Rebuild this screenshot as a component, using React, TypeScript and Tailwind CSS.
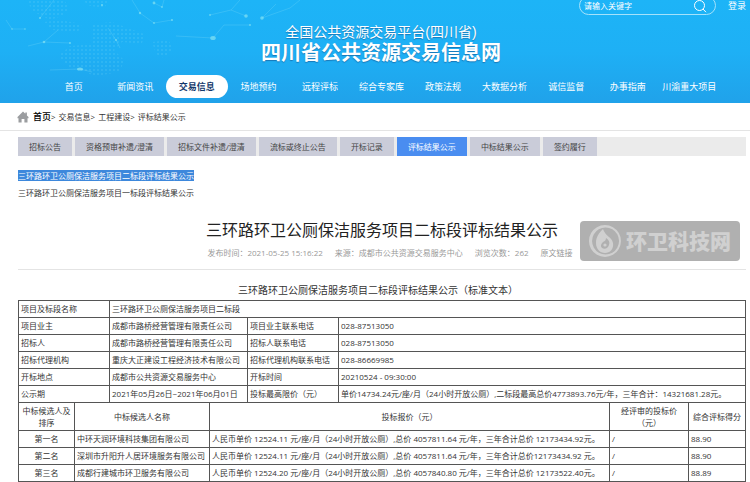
const navItems = [
  "首页",
  "新闻资讯",
  "交易信息",
  "场地预约",
  "远程评标",
  "综合专家库",
  "政策法规",
  "大数据分析",
  "诚信监督",
  "办事指南",
  "川渝重大项目"
];

const tabs = [
  "招标公告",
  "资格预审补遗/澄清",
  "招标文件补遗/澄清",
  "流标或终止公告",
  "开标记录",
  "评标结果公示",
  "中标结果公示",
  "签约履行"
];

const meta = [
  "发布时间：2021-05-25 15:16:22",
  "来源：成都市公共资源交易服务中心",
  "浏览次数：262"
];

const details = [
  ["项目业主", "成都市路桥经营管理有限责任公司", "项目业主联系电话", "028-87513050"],
  ["招标人", "成都市路桥经营管理有限责任公司", "招标人联系电话", "028-87513050"],
  ["招标代理机构", "重庆大正建设工程经济技术有限公司", "招标代理机构联系电话", "028-86669985"],
  ["开标地点", "成都市公共资源交易服务中心", "开标时间", "20210524 - 09:30:00"],
  [
    "公示期",
    "2021年05月26日~2021年06月01日",
    "投标最高限价（元）",
    "单价14734.24元/座/月（24小时开放公厕）,二标段最高总价4773893.76元/年，三年合计：14321681.28元。"
  ]
];

const candidates = [
  {
    rank: "第一名",
    name: "中环天润环境科技集团有限公司",
    price: "人民币单价 12524.11 元/座/月（24小时开放公厕）,总价 4057811.64 元/年，三年合计总价 12173434.92元。",
    score: "88.90"
  },
  {
    rank: "第二名",
    name: "深圳市升阳升人居环境服务有限公司",
    price: "人民币单价 12524.11 元/座/月（24小时开放公厕）,总价 4057811.64 元/年，三年合计总价12173434.92 元。",
    score: "88.90"
  },
  {
    rank: "第三名",
    name: "成都行建城市环卫服务有限公司",
    price: "人民币单价 12524.20 元/座/月（24小时开放公厕）,总价 4057840.80 元/年，三年合计总价 12173522.40元。",
    score: "88.89"
  }
];

const Network = () => (
  <svg
    className="absolute top-0 left-0 w-[375px] h-[103px]"
    viewBox="0 0 375 103"
    fill="none"
    aria-hidden="true"
  >
    <defs>
      <pattern id="dots" width="4" height="4" patternUnits="userSpaceOnUse">
        <circle cx="2" cy="2" r="0.8" fill="#6fd6f7" />
      </pattern>
    </defs>
    <g fill="url(#dots)" opacity="0.45">
      <path d="M26 0H64L70 8L62 16L50 20L34 12Z" />
      <path d="M44 22L60 20L82 24L78 32L52 30Z" />
      <path d="M92 24L112 22L128 28L144 34L142 44L122 42L114 50L124 60L120 72L96 76L70 68L58 56L70 46L92 44Z" />
      <path d="M152 42L168 40L174 48L164 58L156 54Z" />
      <path d="M82 0H110L104 8L90 6Z" />
    </g>
    <g stroke="#7ddcf8" strokeWidth="0.6" opacity="0.45">
      <path d="M40 18L54 0M132 0L140 13L154 23L172 20M154 3L162 7L164 0" />
      <path d="M6 20L12 29H25M210 15L231 10L246 16M231 10L240 0M262 18L276 4" />
      <path d="M176 36L213 38L224 25L250 25M28 46L44 42L58 30M44 42L70 43M262 18L290 8L300 0" />
      <path d="M50 70L80 69L92 72M108 28L116 40L120 48" />
    </g>
    <g fill="#8be6f2" opacity="0.65">
      <circle cx="154" cy="3" r="1.4" />
      <circle cx="162" cy="7" r="0.9" />
      <circle cx="140" cy="13" r="1.2" />
      <circle cx="154" cy="23" r="0.9" />
      <circle cx="172" cy="20" r="1.1" />
      <circle cx="102" cy="5" r="1.1" />
      <circle cx="210" cy="15" r="0.9" />
      <circle cx="246" cy="16" r="1.8" />
      <circle cx="262" cy="18" r="1.8" />
      <ellipse cx="213" cy="38" rx="2.8" ry="2" />
      <circle cx="250" cy="25" r="1" />
      <ellipse cx="80" cy="69" rx="3" ry="1.6" />
      <circle cx="44" cy="42" r="1.3" />
      <circle cx="70" cy="43" r="1" />
      <circle cx="116" cy="40" r="1.1" />
      <circle cx="40" cy="18" r="1" />
      <circle cx="25" cy="29" r="0.8" />
      <circle cx="12" cy="29" r="0.8" />
    </g>
  </svg>
);

const Header = () => (
  <header className="relative overflow-hidden bg-gradient-to-b from-[#1db4f7] via-[#1eb0f5] to-[#20a2ea] text-white pb-[5px]">
    <Network />
    <div className="relative">
      <div className="flex items-center justify-end -mt-1 pr-1">
        <form className="flex items-center w-[137px] h-[19px] mr-3 rounded-full border border-[#a5e2fb] pl-1 pr-2">
          <input
            type="text"
            aria-label="搜索"
            placeholder="请输入关键字"
            className="flex-1 min-w-0 text-[8px] outline-none placeholder:text-white"
          />
          <button type="button" aria-label="搜索按钮">
            <svg className="size-[14px]" viewBox="0 0 14 14" fill="none" stroke="currentColor">
              <circle cx="6.5" cy="6.5" r="5" />
              <path d="M10 10L13 13.2" />
            </svg>
          </button>
        </form>
        <a href="#" className="text-[9px]">
          登录
        </a>
      </div>

      <div className="mt-[7px] pl-3 text-center font-['Liberation_Sans','Noto_Sans_CJK_SC',sans-serif] [text-shadow:0_1px_1px_#1878b8]">
        <p className="text-[14px] leading-5">全国公共资源交易平台(四川省)</p>
        <h1 className="text-[20px] leading-[22px] font-bold">四川省公共资源交易信息网</h1>
      </div>

      <nav className="mt-[11px] pl-[43px] pr-[30px]">
        <ul className="grid grid-cols-11">
          {navItems.map((item) => (
            <li key={item}>
              <a
                href="#"
                className={
                  item === "交易信息"
                    ? "block text-center text-[9px] leading-[23px] whitespace-nowrap rounded-full bg-white text-[#14386b] font-bold"
                    : "block text-center text-[9px] leading-[23px] whitespace-nowrap"
                }
              >
                {item}
              </a>
            </li>
          ))}
        </ul>
      </nav>
    </div>
  </header>
);

const Breadcrumb = () => (
  <nav className="flex items-center h-7 pl-[17px] border-b border-[#e4e4e4] text-[8px] text-[#333]">
    <svg className="w-3 h-3 mr-1" viewBox="0 0 12 12" fill="#9b9da0" aria-hidden="true">
      <path d="M6 0.5L0.5 6V7.3H1.5V11.5H4.6V8H7.4V11.5H10.5V7.3H11.5V6L9.9 4.4V1.5H8.3V2.8Z" />
    </svg>
    <a href="#" className="text-[9px] font-medium text-black">
      首页
    </a>
    <span className="mr-[3px]">&gt;</span>
    <a href="#">交易信息</a>
    <span className="mr-[3px]">&gt;</span>
    <a href="#">工程建设</a>
    <span className="mr-[3px]">&gt;</span>
    <a href="#">评标结果公示</a>
  </nav>
);

const Watermark = () => (
  <div className="absolute top-3 right-[6px] flex items-center w-40 h-10 pl-2 rounded bg-[#b0b0b0] text-[#d0d0d0]">
    <svg className="size-[34px] mr-1" viewBox="0 0 34 34" fill="currentColor" aria-hidden="true">
      <path
        d="M17 1A16 16 0 1 1 16.9 1ZM17.5 3.5A13.5 13.5 0 1 0 17.6 3.5Z"
        fillRule="evenodd"
      />
      <path
        d="M15 5C11 9 8 13 8 19C8 25 12 29 17 29C22 29 26 25 25 19C24 13 17 12 15 5ZM18 14C21 16 22 18 21 21C20 24 17 26 14 24C12 22 13 20 15 18C17 17 18 16 18 14Z"
        fillRule="evenodd"
      />
      <circle cx="17" cy="21" r="1.6" />
    </svg>
    <span className="text-[21px] leading-none font-black whitespace-nowrap">环卫科技网</span>
  </div>
);

const cell = "h-[17px] border border-[#555] px-[2px] py-0 leading-3 font-normal";

export default function App() {
  return (
    <div className="min-h-screen overflow-hidden bg-white text-[#333] font-['Open_Sans','Noto_Sans_CJK_SC',sans-serif]">
      <Header />
      <Breadcrumb />

      <main className="pl-[18px] pr-1">
        <div className="flex gap-[3px] mt-[6px] bg-[#ebebeb] text-[8px] leading-[19px]">
          {tabs.map((tab) => (
            <button
              key={tab}
              type="button"
              className={
                tab === "评标结果公示"
                  ? "px-[11px] whitespace-nowrap bg-[#4a8df0] text-white"
                  : "px-[11px] whitespace-nowrap bg-[#caccd9] text-[#444]"
              }
            >
              {tab}
            </button>
          ))}
        </div>

        <ul className="mt-[11px] text-[8px] leading-[17px]">
          <li>
            <a href="#" className="bg-[#3d88dc] text-white">
              三环路环卫公厕保洁服务项目二标段评标结果公示
            </a>
          </li>
          <li>
            <a href="#">三环路环卫公厕保洁服务项目一标段评标结果公示</a>
          </li>
        </ul>

        <section className="relative mt-2 pt-[9px] pb-[9px] border-b border-[#e4e4e4]">
          <h2 className="text-[16px] leading-6 text-center text-[#222]">
            三环路环卫公厕保洁服务项目二标段评标结果公示
          </h2>
          <div className="flex justify-center gap-3 mt-1 pl-4 text-[8px] leading-[14px] text-[#999]">
            {meta.map((item) => (
              <span key={item}>{item}</span>
            ))}
            <a href="#">原文链接</a>
          </div>
          <Watermark />
        </section>

        <h3 className="mt-3 mb-[2px] pr-2 text-[10px] leading-4 text-center">
          三环路环卫公厕保洁服务项目二标段评标结果公示（标准文本）
        </h3>

        <table className="w-full table-fixed border-collapse text-[8px] text-left whitespace-nowrap">
          <colgroup>
            <col className="w-[91px]" />
            <col className="w-[138px]" />
            <col className="w-[91px]" />
            <col />
          </colgroup>
          <tbody>
            <tr>
              <th className={cell}>项目及标段名称</th>
              <td className={cell} colSpan={3}>
                三环路环卫公厕保洁服务项目二标段
              </td>
            </tr>
            {details.map(([label, value, label2, value2]) => (
              <tr key={label}>
                <th className={cell}>{label}</th>
                <td className={cell}>{value}</td>
                <th className={cell}>{label2}</th>
                <td className={cell}>{value2}</td>
              </tr>
            ))}
          </tbody>
        </table>

        <table className="w-full -mt-px table-fixed border-collapse text-[8px] text-left whitespace-nowrap">
          <colgroup>
            <col className="w-[56px]" />
            <col className="w-[135px]" />
            <col />
            <col className="w-[79px]" />
            <col className="w-[57px]" />
          </colgroup>
          <thead className="text-center">
            <tr className="h-7">
              <th className={cell}>
                中标候选人及
                <br />
                排序
              </th>
              <th className={cell}>中标候选人名称</th>
              <th className={cell}>投标报价（元）</th>
              <th className={cell}>
                经评审的投标价
                <br />
                （元）
              </th>
              <th className={cell}>综合评标得分</th>
            </tr>
          </thead>
          <tbody>
            {candidates.map((item) => (
              <tr key={item.rank}>
                <th className={`${cell} text-center`}>{item.rank}</th>
                <td className={cell}>{item.name}</td>
                <td className={cell}>{item.price}</td>
                <td className={cell}>/</td>
                <td className={cell}>{item.score}</td>
              </tr>
            ))}
          </tbody>
        </table>
      </main>
    </div>
  );
}
